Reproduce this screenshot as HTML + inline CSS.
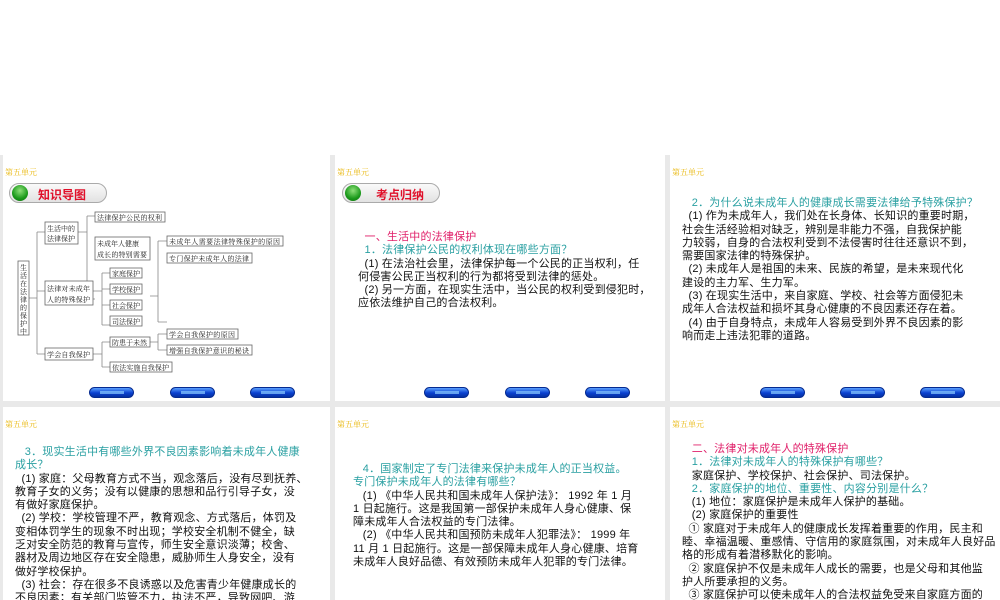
<!DOCTYPE html>
<html><head><meta charset="utf-8">
<style>
*{margin:0;padding:0;box-sizing:border-box}
body{width:1000px;height:600px;background:#fff;position:relative;overflow:hidden;font-family:"Liberation Sans","Noto Sans CJK SC",sans-serif}
.bg{position:absolute;left:0;top:155px;width:1000px;height:445px;background:#e9e9e9}
.s{position:absolute;background:#fff;overflow:hidden}
.u{position:absolute;left:2px;top:12px;font-size:8px;color:#e8b400;font-family:"Liberation Serif","Noto Serif CJK SC",serif}
.t{position:absolute;font-size:11px;line-height:13.3px;letter-spacing:0.2px;white-space:nowrap;color:#111}
.c{color:#2aa0a2}.p{color:#e0206a}
.btn{position:absolute;width:45px;height:11px;border-radius:6px;background:linear-gradient(#5aa0ff,#0a40d0 55%,#0630a0);border:1px solid #052a90}
.btn:after{content:"";position:absolute;left:10px;top:3px;width:24px;height:3px;background:#8ccaff;opacity:.7}
.pill{position:absolute;width:98px;height:20px;border-radius:10px;border:1px solid #aaa;background:linear-gradient(#fafafa,#e2e2e2)}
.dot{position:absolute;left:2px;top:1px;width:16px;height:16px;border-radius:50%;background:radial-gradient(circle at 50% 35%,#8fe07a,#1b9a1b 60%,#0d6a0d)}
.pt{position:absolute;left:26px;top:2px;font-size:12px;font-weight:bold;color:#e0102a;font-family:"Noto Sans CJK SC",sans-serif}
</style></head><body>
<div class="bg"></div>

<!-- slide 1 -->
<div class="s" style="left:3px;top:155px;width:327px;height:246px">
<div class="u">第五单元</div>
<div class="pill" style="left:6px;top:28px"><div class="dot"></div><div class="pt" style="left:28px">知识导图</div></div>
<svg width="327" height="246" style="position:absolute;left:0;top:0" font-family="Liberation Serif,Noto Serif CJK SC,serif" font-size="7">
<g fill="none" stroke="#888" stroke-width="0.8">
<path d="M26 143H34M34 77V199M34 77H42M34 136H42M34 199H42"/>
<path d="M75 77H84M84 61V144M84 61H92M84 144H92"/>
<path d="M147 141H155M155 86V167M155 86H164M155 167H164"/>
<path d="M90 136H99M99 118V170M99 118H107M99 134H107M99 150H107M99 170H107"/>
<path d="M90 199H99M99 187V212M99 187H107M99 212H107"/>
<path d="M147 187H155M155 179V195M155 179H164M155 195H164"/>
</g>
<g fill="#fff" stroke="#666" stroke-width="0.8">
<rect x="15" y="106" width="11" height="74"/>
<rect x="42" y="67" width="33" height="22"/>
<rect x="42" y="126" width="48" height="24"/>
<rect x="42" y="193" width="48" height="12"/>
<rect x="92" y="57" width="70" height="10"/>
<rect x="92" y="82" width="55" height="23"/>
<rect x="164" y="81" width="116" height="10"/>
<rect x="164" y="98" width="85" height="10"/>
<rect x="107" y="113" width="32" height="10"/>
<rect x="107" y="129" width="32" height="10"/>
<rect x="107" y="145" width="32" height="10"/>
<rect x="107" y="161" width="32" height="10"/>
<rect x="107" y="182" width="40" height="10"/>
<rect x="107" y="207" width="62" height="10"/>
<rect x="164" y="174" width="71" height="10"/>
<rect x="164" y="190" width="85" height="10"/>
</g>
<g fill="#222">
<text font-size="7"><tspan x="17" y="115">生</tspan><tspan x="17" dy="8">活</tspan><tspan x="17" dy="8">在</tspan><tspan x="17" dy="8">法</tspan><tspan x="17" dy="8">律</tspan><tspan x="17" dy="8">的</tspan><tspan x="17" dy="8">保</tspan><tspan x="17" dy="8">护</tspan><tspan x="17" dy="8">中</tspan></text>
<text x="44" y="76" textLength="28">生活中的</text><text x="44" y="86" textLength="28">法律保护</text>
<text x="44" y="136" textLength="43">法律对未成年</text><text x="44" y="147" textLength="43">人的特殊保护</text>
<text x="44" y="202" textLength="43">学会自我保护</text>
<text x="94" y="65" textLength="65">法律保护公民的权利</text>
<text x="94" y="91" textLength="42">未成年人健康</text><text x="94" y="102" textLength="50">成长的特别需要</text>
<text x="166" y="89" textLength="111">未成年人需要法律特殊保护的原因</text>
<text x="166" y="106" textLength="80">专门保护未成年人的法律</text>
<text x="109" y="121" textLength="28">家庭保护</text><text x="109" y="137" textLength="28">学校保护</text>
<text x="109" y="153" textLength="28">社会保护</text><text x="109" y="169" textLength="28">司法保护</text>
<text x="109" y="190" textLength="35">防患于未然</text>
<text x="109" y="215" textLength="57">依法实施自我保护</text>
<text x="166" y="182" textLength="66">学会自我保护的原因</text>
<text x="166" y="198" textLength="80">增强自我保护意识的秘诀</text>
</g></svg>
<div class="btn" style="left:86px;top:232px"></div><div class="btn" style="left:167px;top:232px"></div><div class="btn" style="left:247px;top:232px"></div>
</div>

<!-- slide 2 -->
<div class="s" style="left:335px;top:155px;width:330px;height:246px">
<div class="u">第五单元</div>
<div class="pill" style="left:7px;top:28px"><div class="dot"></div><div class="pt" style="left:33px">考点归纳</div></div>
<div class="t" style="left:23px;top:76px"><span class="p">&nbsp;&nbsp;一、生活中的法律保护</span><br><span class="c">&nbsp;&nbsp;1．法律保护公民的权利体现在哪些方面？</span><br>&nbsp;&nbsp;(1) 在法治社会里，法律保护每一个公民的正当权利，任<br>何侵害公民正当权利的行为都将受到法律的惩处。<br>&nbsp;&nbsp;(2) 另一方面，在现实生活中，当公民的权利受到侵犯时，<br>应依法维护自己的合法权利。</div>
<div class="btn" style="left:89px;top:232px"></div><div class="btn" style="left:170px;top:232px"></div><div class="btn" style="left:250px;top:232px"></div>
</div>

<!-- slide 3 -->
<div class="s" style="left:670px;top:155px;width:330px;height:246px">
<div class="u">第五单元</div>
<div class="t" style="left:12px;top:42px"><span class="c">&nbsp;&nbsp;&nbsp;2．为什么说未成年人的健康成长需要法律给予特殊保护？</span><br>&nbsp;&nbsp;(1) 作为未成年人，我们处在长身体、长知识的重要时期，<br>社会生活经验相对缺乏，辨别是非能力不强，自我保护能<br>力较弱，自身的合法权利受到不法侵害时往往还意识不到，<br>需要国家法律的特殊保护。<br>&nbsp;&nbsp;(2) 未成年人是祖国的未来、民族的希望，是未来现代化<br>建设的主力军、生力军。<br>&nbsp;&nbsp;(3) 在现实生活中，来自家庭、学校、社会等方面侵犯未<br>成年人合法权益和损坏其身心健康的不良因素还存在着。<br>&nbsp;&nbsp;(4) 由于自身特点，未成年人容易受到外界不良因素的影<br>响而走上违法犯罪的道路。</div>
<div class="btn" style="left:90px;top:232px"></div><div class="btn" style="left:170px;top:232px"></div><div class="btn" style="left:250px;top:232px"></div>
</div>

<!-- slide 4 -->
<div class="s" style="left:3px;top:407px;width:327px;height:193px">
<div class="u">第五单元</div>
<div class="t" style="left:12px;top:39px"><span class="c">&nbsp;&nbsp;&nbsp;3．现实生活中有哪些外界不良因素影响着未成年人健康<br>成长？</span><br>&nbsp;&nbsp;(1) 家庭：父母教育方式不当，观念落后，没有尽到抚养、<br>教育子女的义务；没有以健康的思想和品行引导子女，没<br>有做好家庭保护。<br>&nbsp;&nbsp;(2) 学校：学校管理不严，教育观念、方式落后，体罚及<br>变相体罚学生的现象不时出现；学校安全机制不健全，缺<br>乏对安全防范的教育与宣传，师生安全意识淡薄；校舍、<br>器材及周边地区存在安全隐患，威胁师生人身安全，没有<br>做好学校保护。<br>&nbsp;&nbsp;(3) 社会：存在很多不良诱惑以及危害青少年健康成长的<br>不良因素；有关部门监管不力，执法不严，导致网吧、游</div>
</div>

<!-- slide 5 -->
<div class="s" style="left:335px;top:407px;width:330px;height:193px">
<div class="u">第五单元</div>
<div class="t" style="left:18px;top:56px"><span class="c">&nbsp;&nbsp;&nbsp;4．国家制定了专门法律来保护未成年人的正当权益。<br>专门保护未成年人的法律有哪些？</span><br>&nbsp;&nbsp;&nbsp;(1) 《中华人民共和国未成年人保护法》： 1992 年 1 月<br>1 日起施行。这是我国第一部保护未成年人身心健康、保<br>障未成年人合法权益的专门法律。<br>&nbsp;&nbsp;&nbsp;(2) 《中华人民共和国预防未成年人犯罪法》： 1999 年<br>11 月 1 日起施行。这是一部保障未成年人身心健康、培育<br>未成年人良好品德、有效预防未成年人犯罪的专门法律。</div>
</div>

<!-- slide 6 -->
<div class="s" style="left:670px;top:407px;width:330px;height:193px">
<div class="u">第五单元</div>
<div class="t" style="left:12px;top:36px"><span class="p">&nbsp;&nbsp;&nbsp;二、法律对未成年人的特殊保护</span><br><span class="c">&nbsp;&nbsp;&nbsp;1．法律对未成年人的特殊保护有哪些？</span><br>&nbsp;&nbsp;&nbsp;家庭保护、学校保护、社会保护、司法保护。<br><span class="c">&nbsp;&nbsp;&nbsp;2．家庭保护的地位、重要性、内容分别是什么？</span><br>&nbsp;&nbsp;&nbsp;(1) 地位：家庭保护是未成年人保护的基础。<br>&nbsp;&nbsp;&nbsp;(2) 家庭保护的重要性<br>&nbsp;&nbsp;① 家庭对于未成年人的健康成长发挥着重要的作用，民主和<br>睦、幸福温暖、重感情、守信用的家庭氛围，对未成年人良好品<br>格的形成有着潜移默化的影响。<br>&nbsp;&nbsp;② 家庭保护不仅是未成年人成长的需要，也是父母和其他监<br>护人所要承担的义务。<br>&nbsp;&nbsp;③ 家庭保护可以使未成年人的合法权益免受来自家庭方面的</div>
</div>
</body></html>
